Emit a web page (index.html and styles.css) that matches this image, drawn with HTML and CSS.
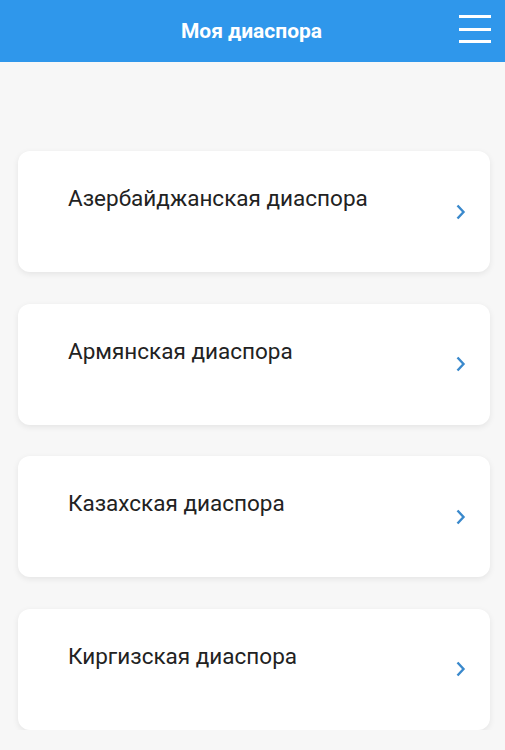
FILE: index.html
```html
<!DOCTYPE html>
<html>
<head>
	<meta charset="utf-8">
	<meta name="viewport" content="width=device-width, initial-scale=1">
	<title>Моя диаспора</title>
	<link rel="stylesheet" href="styles.css">
</head>

<body>
	<header class="topbar">
		<h1 class="title">Моя диаспора</h1>
		<div class="burger">
			<span></span>
			<span></span>
			<span></span>
		</div>
	</header>

	<div class="list">
		<a class="card" href="#">
			<p class="name">Азербайджанская диаспора</p>
			<svg class="arrow" width="12" height="18" viewBox="0 0 12 18"><path d="M2.5 2.5 L8.5 9 L2.5 15.5" fill="none" stroke="#3a89cc" stroke-width="2.4"/></svg>
		</a>
		<a class="card" href="#">
			<p class="name">Армянская диаспора</p>
			<svg class="arrow" width="12" height="18" viewBox="0 0 12 18"><path d="M2.5 2.5 L8.5 9 L2.5 15.5" fill="none" stroke="#3a89cc" stroke-width="2.4"/></svg>
		</a>
		<a class="card" href="#">
			<p class="name">Казахская диаспора</p>
			<svg class="arrow" width="12" height="18" viewBox="0 0 12 18"><path d="M2.5 2.5 L8.5 9 L2.5 15.5" fill="none" stroke="#3a89cc" stroke-width="2.4"/></svg>
		</a>
		<a class="card" href="#">
			<p class="name">Киргизская диаспора</p>
			<svg class="arrow" width="12" height="18" viewBox="0 0 12 18"><path d="M2.5 2.5 L8.5 9 L2.5 15.5" fill="none" stroke="#3a89cc" stroke-width="2.4"/></svg>
		</a>
	</div>
</body>
</html>
```

FILE: styles.css
```css
body {
	margin: 0;
	background: #f7f7f7;
	font-family: Roboto, "Noto Sans", sans-serif;
	overflow: hidden;
}

.topbar {
	height: 62px;
	background: #2f97eb;
	display: flex;
	align-items: center;
	justify-content: center;
	position: relative;
}
.title {
	margin: 0 0 0 -2px;
	color: #fff;
	font-size: 21px;
	font-weight: bold;
}
.burger {
	position: absolute;
	top: 15px;
	right: 14px;
	width: 32px;
	display: flex;
	flex-direction: column;
	gap: 9.5px;
}
.burger span {
	display: block;
	height: 3px;
	background: #fff;
}

.list {
	padding: 89px 15px 0 18px;
	display: flex;
	flex-direction: column;
	gap: 31.5px;
}
.card {
	height: 121px;
	box-sizing: border-box;
	background: #fff;
	border-radius: 12px;
	box-shadow: 0 2px 6px rgba(0, 0, 0, 0.08);
	display: flex;
	align-items: center;
	justify-content: space-between;
	padding: 0 23px 0 50px;
	text-decoration: none;
}
.name {
	margin: 0;
	align-self: flex-start;
	padding-top: 34px;
	color: #222;
	font-size: 22.5px;
}
.arrow {
	display: block;
}
```
